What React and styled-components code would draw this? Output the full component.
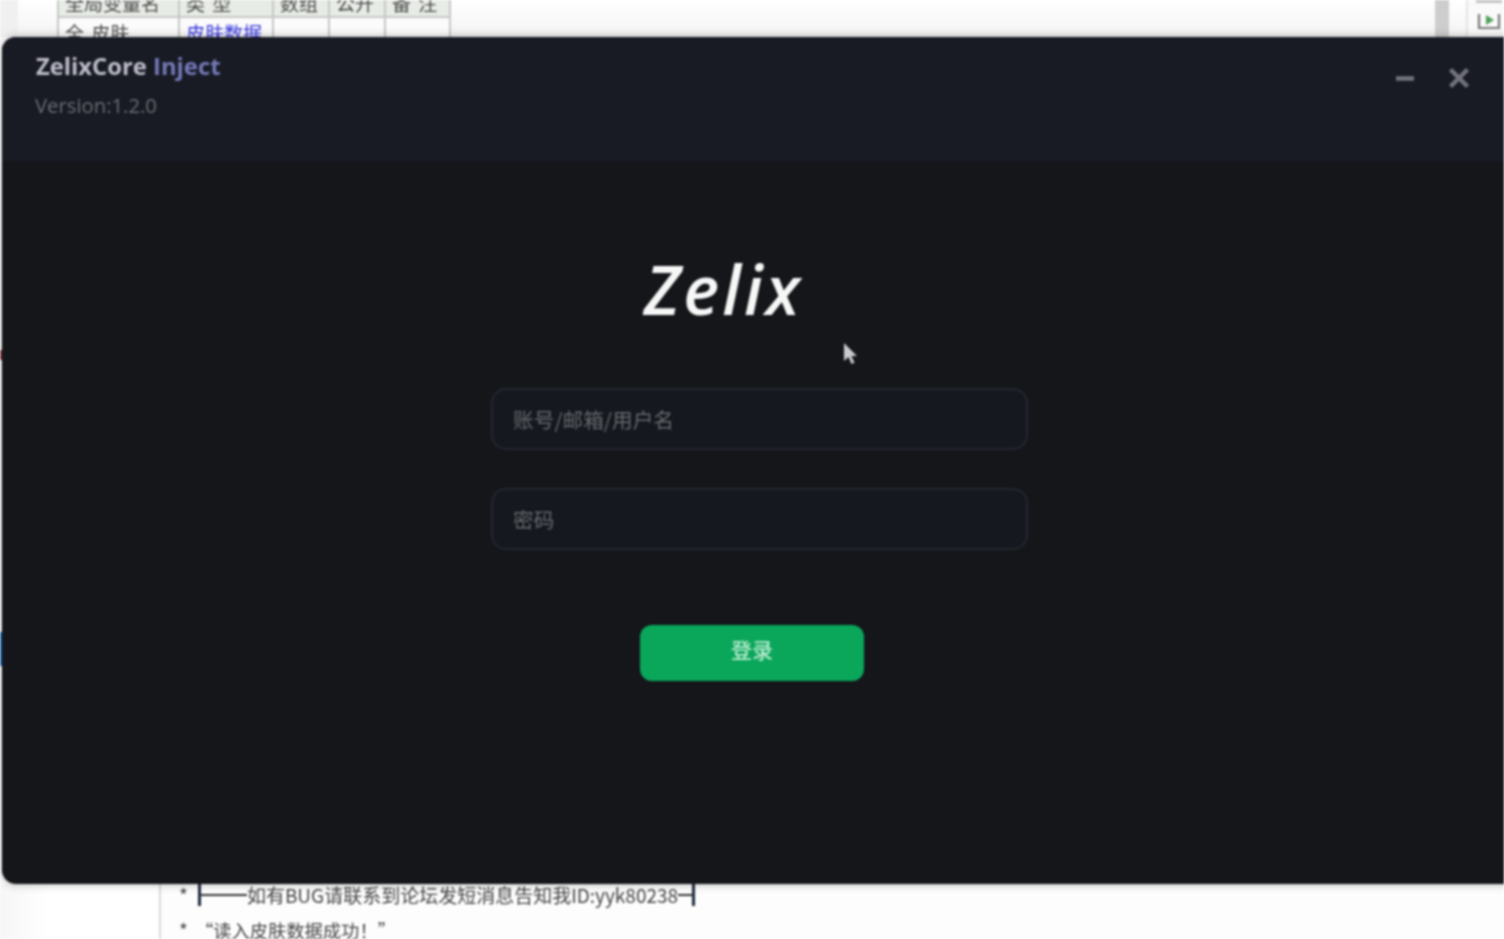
import React from "react";
import styled, { createGlobalStyle } from "styled-components";

const Global = createGlobalStyle`
  html, body {
    margin: 0;
    padding: 0;
    background: #fff;
  }
`;

const Desktop = styled.div`
  position: relative;
  width: 1504px;
  height: 939px;
  overflow: hidden;
  display: flex;
  flex-direction: column;
  justify-content: space-between;
  background: #fdfdfd;
  font-family: "Noto Sans CJK SC", "Liberation Sans", sans-serif;
  filter: blur(0.8px);
`;

const TopStrip = styled.div`
  height: 37px;
  display: flex;
  background: linear-gradient(#ffffff, #f4f4f4);
`;

const LeftGutter = styled.div`
  width: 18px;
  background: #f0f0f0;
  margin-right: 39px;
`;

const VarTable = styled.div`
  display: grid;
  grid-template-columns: 121px 94px 56px 56px 65px;
  grid-auto-rows: 18px 30px;
  height: 48px;
  width: 392px;
  border-left: 2px solid #c4c8c4;
`;

const Cell = styled.div`
  box-sizing: border-box;
  border-right: 2px solid #c4c8c4;
  border-bottom: 2px solid #c4c8c4;
  background: ${(p) => (p.$head ? "#e8ece6" : "#fbfbfb")};
  color: ${(p) => (p.$link ? "#3434e0" : "#4a4a4a")};
  font-size: 19px;
  line-height: 18px;
  padding: ${(p) => (p.$head ? "0 0 0 6px" : "6px 0 0 6px")};
  word-spacing: 3px;
  white-space: nowrap;
  overflow: hidden;
  & > span {
    display: block;
    margin-top: ${(p) => (p.$head ? "-6px" : "0")};
  }
`;

const Scrollbar = styled.div`
  width: 14px;
  margin-left: auto;
  background: #cdcdcd;
`;

const SidePanel = styled.div`
  width: 38px;
  margin-left: 17px;
  border-left: 2px solid #e4e4e4;
  background: #fafafa;
  display: flex;
  flex-direction: column;
  align-items: flex-end;
  gap: 9px;
  padding-right: 2px;
  box-sizing: border-box;
`;

const SideButton = styled.div`
  width: 26px;
  height: 3px;
  background: #c4c4c4;
`;

const BottomStrip = styled.div`
  height: 55px;
  display: flex;
  background: #fdfdfd;
`;

const CodeMargin = styled.div`
  width: 159px;
  border-right: 2px solid #d8d8dc;
  background: linear-gradient(90deg, #f6f6f6, #ffffff 30%);
`;

const CodeLines = styled.div`
  margin-top: -7px;
  padding-left: 18px;
  color: #444;
  font-size: 19px;
  white-space: nowrap;
`;

const CodeLine = styled.div`
  display: flex;
  align-items: center;
  height: 35px;
  gap: 10px;
`;

const Tee = styled.span`
  display: inline-block;
  width: ${(p) => p.$w}px;
  height: 2px;
  background: #333;
  position: relative;
  &::before {
    content: "";
    position: absolute;
    ${(p) => p.$side}: 0;
    top: -10px;
    width: 3px;
    height: 22px;
    background: #1d2a3a;
  }
`;

const TeeText = styled.span`
  display: flex;
  align-items: center;
`;

const Quoted = styled.span`
  font-size: 18.3px;
  margin-left: -3px;
`;

const EdgeMark = styled.div`
  position: absolute;
  left: 0;
  width: 2px;
  top: ${(p) => p.$top}px;
  height: ${(p) => p.$h}px;
  background: ${(p) => p.$color};
`;

const Window = styled.div`
  position: absolute;
  left: 2px;
  top: 37px;
  width: 1530px;
  height: 847px;
  border-radius: 14px;
  overflow: hidden;
  display: flex;
  flex-direction: column;
  background: #14161a;
  box-shadow: 0 0 10px rgba(0, 0, 0, 0.3);
`;

const TitleBar = styled.header`
  height: 124px;
  flex: none;
  box-sizing: border-box;
  background: #191b24;
  padding: 13px 0 0 34px;
  display: flex;
  justify-content: space-between;
`;

const AppTitle = styled.div`
  font-family: "Open Sans", "Noto Sans", sans-serif;
  font-size: 23.8px;
  line-height: 32px;
  font-weight: 700;
  color: #bdbdca;
`;

const Accent = styled.span`
  color: #7479b8;
`;

const Version = styled.div`
  font-family: "Open Sans", "Noto Sans", sans-serif;
  font-size: 20.3px;
  line-height: 27px;
  margin: 10px 0 0 -1px;
  color: #6a6c73;
`;

const WindowButtons = styled.div`
  display: flex;
  gap: 33px;
  align-items: flex-start;
  padding: 16px 61px 0 0;
`;

const Main = styled.main`
  flex: 1;
  display: flex;
  flex-direction: column;
  align-items: flex-start;
  padding: 92px 0 0 489px;
`;

const Logo = styled.div`
  font-family: "Open Sans", "Noto Sans", sans-serif;
  font-style: italic;
  font-weight: 600;
  font-size: 68px;
  line-height: 72px;
  color: #f7f7f7;
  letter-spacing: 3px;
  margin-left: 153px;
`;

const Field = styled.input`
  display: block;
  box-sizing: border-box;
  width: 537px;
  height: 62px;
  margin-top: ${(p) => p.$top}px;
  padding: 0 20px;
  border-radius: 15px;
  border: 2px solid #23272e;
  background: #15181f;
  outline: none;
  color: #ddd;
  font-family: "Noto Sans CJK SC", "Noto Sans", sans-serif;
  font-size: 20.7px;
  &::placeholder {
    color: #66686c;
    opacity: 1;
  }
`;

const LoginButton = styled.button`
  width: 224px;
  height: 56px;
  margin: 75px 0 0 149px;
  padding: 0 0 8px;
  border: 0;
  border-radius: 12px;
  background: #0aa65a;
  color: #b9ecd0;
  font-family: "Noto Sans CJK SC", "Noto Sans", sans-serif;
  font-size: 21px;
  font-weight: 500;
`;

const Pointer = styled.svg`
  position: absolute;
  left: 842px;
  top: 342px;
`;

const App = () => (
  <Desktop>
    <Global />
    <TopStrip>
      <LeftGutter />
      <VarTable>
        <Cell $head><span>全局变量名</span></Cell>
        <Cell $head><span>类 型</span></Cell>
        <Cell $head><span>数组</span></Cell>
        <Cell $head><span>公开</span></Cell>
        <Cell $head><span>备 注</span></Cell>
        <Cell><span>全 皮肤</span></Cell>
        <Cell $link><span>皮肤数据</span></Cell>
        <Cell />
        <Cell />
        <Cell />
      </VarTable>
      <Scrollbar />
      <SidePanel>
        <SideButton />
        <svg width="26" height="20" viewBox="0 0 26 20" fill="none">
          <path d="M3 2v14h20V2" stroke="#777" strokeWidth="2.2" />
          <path d="M10 3l8 5-8 5z" fill="#4f9f55" />
        </svg>
      </SidePanel>
    </TopStrip>
    <BottomStrip>
      <CodeMargin />
      <CodeLines>
        <CodeLine>
          <span>*</span>
          <TeeText>
            <Tee $w={49} $side="left" />
            如有BUG请联系到论坛发短消息告知我ID:yyk80238
            <Tee $w={17} $side="right" />
          </TeeText>
        </CodeLine>
        <CodeLine>
          <span>*</span>
          <Quoted>“读入皮肤数据成功！”</Quoted>
        </CodeLine>
      </CodeLines>
    </BottomStrip>
    <EdgeMark $top={350} $h={10} $color="#8a3a3a" />
    <EdgeMark $top={632} $h={34} $color="#1a6fc0" />
    <Window>
      <TitleBar>
        <div>
          <AppTitle>
            ZelixCore <Accent>Inject</Accent>
          </AppTitle>
          <Version>Version:1.2.0</Version>
        </div>
        <WindowButtons>
          <svg width="18" height="20" viewBox="0 0 18 20" fill="none">
            <path d="M0 12.5h18" stroke="#72737c" strokeWidth="4.4" />
          </svg>
          <svg width="24" height="24" viewBox="0 0 24 24" fill="none">
            <path d="M3.5 3.5l17 17M20.5 3.5l-17 17" stroke="#72737c" strokeWidth="4.4" />
          </svg>
        </WindowButtons>
      </TitleBar>
      <Main>
        <Logo>Zelix</Logo>
        <Field $top={63} placeholder="账号/邮箱/用户名" />
        <Field $top={38} placeholder="密码" />
        <LoginButton>登录</LoginButton>
      </Main>
    </Window>
    <Pointer width="16" height="24" viewBox="0 0 16 24">
      <path d="M2 1v18l4.5-4 3 7 3-1.2-3-6.8h5.5z" fill="#c9cacd" />
    </Pointer>
  </Desktop>
);

export default App;
